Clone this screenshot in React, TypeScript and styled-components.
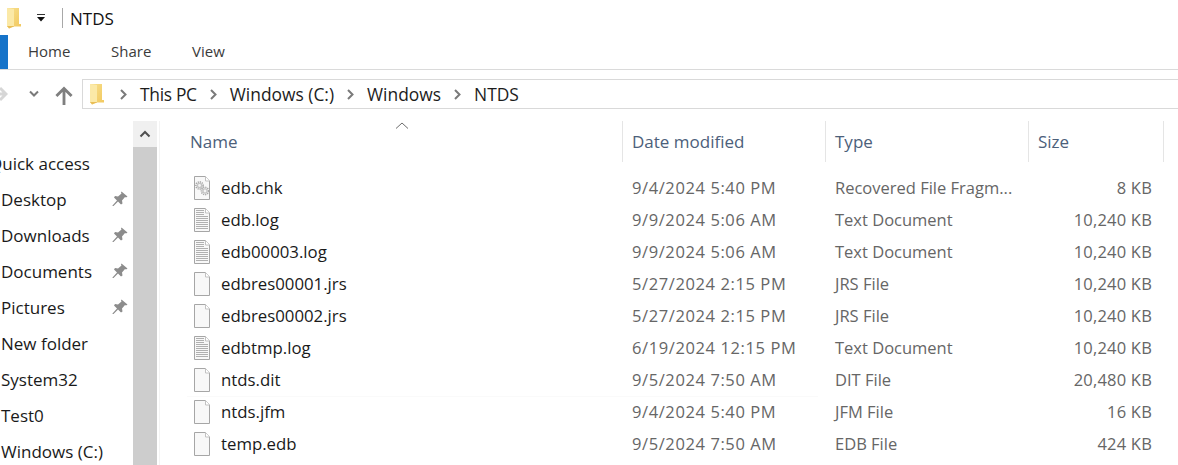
import React from "react";
import styled, { createGlobalStyle } from "styled-components";

const GlobalStyle = createGlobalStyle`
  html, body {
    margin: 0;
    padding: 0;
    background: #ffffff;
  }
  body {
    font-family: "Open Sans", "Noto Sans", "Liberation Sans", sans-serif;
    overflow: hidden;
  }
`;

const Page = styled.div`
  width: 1178px;
  height: 465px;
  overflow: hidden;
  display: flex;
  flex-direction: column;
`;

const TitleBar = styled.div`
  height: 34px;
  margin-top: 1px;
  display: flex;
  align-items: center;
  padding-left: 6px;
  font-size: 17px;
  color: #111111;
`;

const QuickMenu = styled.div`
  width: 16px;
  margin-left: 11px;
  margin-right: 13px;
  display: flex;
  justify-content: center;
`;

const TitleDivider = styled.div`
  width: 1px;
  height: 20px;
  background: #a8a8a8;
  margin-right: 7px;
`;

const RibbonTabs = styled.div`
  height: 34px;
  display: flex;
  align-items: center;
  border-bottom: 1px solid #dadada;
`;

const FileTab = styled.div`
  width: 8px;
  height: 34px;
  background: #1673c9;
  margin-right: 20px;
`;

const RibbonTab = styled.div<{ $width: number }>`
  width: ${({ $width }) => $width}px;
  font-size: 15px;
  line-height: 32px;
  height: 34px;
  color: #3b3b3b;
`;

const NavBar = styled.div`
  height: 30px;
  margin-top: 9px;
  display: flex;
  align-items: center;
`;

const NavButtons = styled.div`
  width: 82px;
  height: 30px;
  flex: none;
  display: flex;
  align-items: center;
`;

const ForwardArrow = styled.svg`
  width: 8px;
  height: 18px;
  margin-right: 20px;
`;

const RecentChevron = styled.svg`
  width: 12px;
  height: 8px;
  margin-right: 15px;
`;

const UpArrow = styled.svg`
  width: 18px;
  height: 19px;
  margin-top: 2px;
`;

const AddressBox = styled.div`
  flex: 1;
  height: 30px;
  box-sizing: border-box;
  border: 1px solid #d9d9d9;
  border-right: 0;
  display: flex;
  align-items: center;
  padding-left: 6px;
  font-size: 17.4px;
  color: #1c1c1c;
`;

const Crumb = styled.span<{ $tight?: boolean }>`
  white-space: nowrap;
  letter-spacing: ${({ $tight }) => ($tight ? "-0.3px" : "0")};
`;

const CrumbArrow = styled.svg<{ $first?: boolean }>`
  width: 7px;
  height: 11px;
  margin-left: ${({ $first }) => ($first ? 15 : 13)}px;
  margin-right: ${({ $first }) => ($first ? 13 : 13)}px;
`;

const Main = styled.div`
  flex: 1;
  margin-top: 12px;
  display: flex;
  min-height: 0;
`;

const NavPane = styled.div`
  width: 133px;
  flex: none;
  padding-top: 24px;
  box-sizing: border-box;
  overflow: hidden;
`;

const NavItem = styled.div<{ $outdent?: boolean }>`
  height: 36px;
  display: flex;
  align-items: center;
  justify-content: space-between;
  margin-left: ${({ $outdent }) => ($outdent ? -11 : 1)}px;
  padding-right: 5px;
  font-size: 17px;
  color: #1a1a1a;
  white-space: nowrap;
`;

const PinIcon = styled.svg`
  width: 16px;
  height: 16px;
  flex: none;
`;

const ScrollBar = styled.div`
  width: 24px;
  flex: none;
  display: flex;
  flex-direction: column;
  background: #cdcdcd;
`;

const ScrollUp = styled.div`
  height: 26px;
  background: #f0f0f0;
  display: flex;
  align-items: center;
  justify-content: center;
`;

const FileList = styled.div`
  flex: 1;
  margin-left: 2px;
  border-left: 1px solid #f3f3f3;
  position: relative;
`;

const columns = "462px 203px 203px 135px 1fr";

const HeaderRow = styled.div`
  display: grid;
  grid-template-columns: ${columns};
  height: 41px;
  margin-bottom: 10px;
  align-items: stretch;
`;

const HeaderCell = styled.div<{ $first?: boolean }>`
  display: flex;
  align-items: center;
  padding-left: ${({ $first }) => ($first ? 30 : 9)}px;
  border-left: ${({ $first }) => ($first ? "0" : "1px solid #e5e5e5")};
  font-size: 17px;
  color: #4c607a;
`;

const HeaderEnd = styled.div`
  border-left: 1px solid #e5e5e5;
`;

const SortCaret = styled.svg`
  position: absolute;
  left: 235px;
  top: 1px;
  width: 14px;
  height: 7px;
`;

const FileRow = styled.div`
  display: grid;
  grid-template-columns: ${columns};
  height: 32px;
  align-items: center;
  font-size: 16.5px;
  color: #666666;
  white-space: nowrap;
`;

const NameCell = styled.div`
  display: flex;
  align-items: center;
  padding-left: 33px;
  font-size: 16.8px;
  color: #1a1a1a;
`;

const FileName = styled.span`
  margin-left: 10px;
  padding-bottom: 2px;
`;

const DetailCell = styled.div<{ $spacing?: number }>`
  padding-left: 10px;
  padding-bottom: 2px;
  letter-spacing: ${({ $spacing }) => $spacing ?? 0}px;
`;

const SizeCell = styled.div`
  text-align: right;
  padding-right: 11px;
  padding-bottom: 2px;
  letter-spacing: 0.2px;
`;

const RowRule = styled.div`
  position: absolute;
  left: 27px;
  top: 275px;
  width: 631px;
  height: 1px;
  background: #fafafa;
`;

const FileIconSvg = styled.svg`
  width: 18px;
  height: 24px;
  flex: none;
`;

type IconKind = "blank" | "text" | "gear";

const Gear: React.FC<{ x: number; y: number; r: number }> = ({ x, y, r }) => (
  <g>
    <circle cx={x} cy={y} r={r} fill="none" stroke="#a8a8a8" strokeWidth="1.600" strokeDasharray="1.200 .9" />
    <circle cx={x} cy={y} r={r - 0.8} fill="#c4c4c4" />
    <circle cx={x} cy={y} r={r - 2.2} fill="#f4f4f4" />
  </g>
);

const FileIcon: React.FC<{ kind: IconKind }> = ({ kind }) => (
  <FileIconSvg viewBox="0 0 18 24">
    <path d="M1.500.5h11l4 4.500v18.500h-15z" fill="#f8f8f8" stroke="#a6a6a6" />
    <path d="M12.500.5v4.500h4" fill="#ffffff" stroke="#c2c2c2" />
    {kind === "text" &&
      [8, 10, 12, 14, 16, 18, 20].map((y) => (
        <rect key={y} x="3" y={y} width="12" height="1" fill="#b0b0b0" />
      ))}
    {kind === "text" && [2, 4, 6].map((y) => <rect key={y} x="3" y={y} width="8" height="1" fill="#b0b0b0" />)}
    {kind === "gear" && (
      <g>
        <Gear x={6.5} y={9.5} r={3.6} />
        <Gear x={12} y={15} r={3.6} />
      </g>
    )}
  </FileIconSvg>
);

const FolderSvg = styled.svg`
  width: 16px;
  height: 24px;
  flex: none;
`;

const FolderIcon: React.FC<{ id: string }> = ({ id }) => (
  <FolderSvg viewBox="0 0 16 24">
    <defs>
      <linearGradient id={id} x1="0" y1="0" x2="1" y2="1">
        <stop offset="0" stopColor="#f7e08f" />
        <stop offset="1" stopColor="#f2c95f" />
      </linearGradient>
    </defs>
    <path d="M1 2h12v16h2v2.500H1z" fill={`url(#${id})`} />
    <path d="M1 2l7 1v17l-5 2.500L1 20z" fill="#fbe9a7" />
    <path d="M1 20l2 2.500 5-2V20z" fill="#e9bd55" />
  </FolderSvg>
);

const Pin: React.FC = () => (
  <PinIcon viewBox="0 0 16 16">
    <path
      d="M9.500 0.500l6 5-1.500 1-1-.5-3 3.500.5 3-1.500 1-3-3-4.500 4.500H.5v-.5L5 9.500 2 6.500l1-1.500 3 .5L9.500 2.500l-.5-1z"
      fill="#8c8c8c"
    />
  </PinIcon>
);

const Arrow: React.FC<{ first?: boolean }> = ({ first }) => (
  <CrumbArrow viewBox="0 0 7 11" $first={first}>
    <path d="M1 1l4.500 4.500L1 10" fill="none" stroke="#7a7a7a" strokeWidth="2" />
  </CrumbArrow>
);

const navItems = [
  { label: "Quick access", outdent: true },
  { label: "Desktop", pinned: true },
  { label: "Downloads", pinned: true },
  { label: "Documents", pinned: true },
  { label: "Pictures", pinned: true },
  { label: "New folder" },
  { label: "System32" },
  { label: "Test0" },
  { label: "Windows (C:)" },
];

const files: { name: string; icon: IconKind; date: string; type: string; size: string }[] = [
  { name: "edb.chk", icon: "gear", date: "9/4/2024 5:40 PM", type: "Recovered File Fragm...", size: "8 KB" },
  { name: "edb.log", icon: "text", date: "9/9/2024 5:06 AM", type: "Text Document", size: "10,240 KB" },
  { name: "edb00003.log", icon: "text", date: "9/9/2024 5:06 AM", type: "Text Document", size: "10,240 KB" },
  { name: "edbres00001.jrs", icon: "blank", date: "5/27/2024 2:15 PM", type: "JRS File", size: "10,240 KB" },
  { name: "edbres00002.jrs", icon: "blank", date: "5/27/2024 2:15 PM", type: "JRS File", size: "10,240 KB" },
  { name: "edbtmp.log", icon: "text", date: "6/19/2024 12:15 PM", type: "Text Document", size: "10,240 KB" },
  { name: "ntds.dit", icon: "blank", date: "9/5/2024 7:50 AM", type: "DIT File", size: "20,480 KB" },
  { name: "ntds.jfm", icon: "blank", date: "9/4/2024 5:40 PM", type: "JFM File", size: "16 KB" },
  { name: "temp.edb", icon: "blank", date: "9/5/2024 7:50 AM", type: "EDB File", size: "424 KB" },
];

const App: React.FC = () => (
  <Page>
    <GlobalStyle />
    <TitleBar>
      <FolderIcon id="titleFolder" />
      <QuickMenu>
        <svg width="10" height="8" viewBox="0 0 10 8">
          <rect x="1" y="0" width="8" height="1" fill="#333" />
          <path d="M1 3h8L5 7.500z" fill="#111" />
        </svg>
      </QuickMenu>
      <TitleDivider />
      NTDS
    </TitleBar>
    <RibbonTabs>
      <FileTab />
      <RibbonTab $width={83}>Home</RibbonTab>
      <RibbonTab $width={81}>Share</RibbonTab>
      <RibbonTab $width={60}>View</RibbonTab>
    </RibbonTabs>
    <NavBar>
      <NavButtons>
        <ForwardArrow viewBox="0 0 8 18">
          <path d="M-6 9h12M0 3l6 6-6 6" fill="none" stroke="#d6d6d6" strokeWidth="3" />
        </ForwardArrow>
        <RecentChevron viewBox="0 0 12 8">
          <path d="M2 1.500l4 4 4-4" fill="none" stroke="#7a7a7a" strokeWidth="2" />
        </RecentChevron>
        <UpArrow viewBox="0 0 19 20">
          <path d="M9.500 20V3M1.500 10.500l8-8 8 8" fill="none" stroke="#7f7f7f" strokeWidth="3" />
        </UpArrow>
      </NavButtons>
      <AddressBox>
        <FolderIcon id="addressFolder" />
        <Arrow first />
        <Crumb $tight>This PC</Crumb>
        <Arrow />
        <Crumb>Windows (C:)</Crumb>
        <Arrow />
        <Crumb>Windows</Crumb>
        <Arrow />
        <Crumb>NTDS</Crumb>
      </AddressBox>
    </NavBar>
    <Main>
      <NavPane>
        {navItems.map((item) => (
          <NavItem key={item.label} $outdent={item.outdent}>
            {item.label}
            {item.pinned && <Pin />}
          </NavItem>
        ))}
      </NavPane>
      <ScrollBar>
        <ScrollUp>
          <svg width="12" height="8" viewBox="0 0 12 8">
            <path d="M1.500 6.500L6 2l4.500 4.500" fill="none" stroke="#505050" strokeWidth="2" />
          </svg>
        </ScrollUp>
      </ScrollBar>
      <FileList>
        <SortCaret viewBox="0 0 14 7">
          <path d="M1 6.500l6-5.500 6 5.500" fill="none" stroke="#6d6d6d" />
        </SortCaret>
        <HeaderRow>
          <HeaderCell $first>Name</HeaderCell>
          <HeaderCell>Date modified</HeaderCell>
          <HeaderCell>Type</HeaderCell>
          <HeaderCell>Size</HeaderCell>
          <HeaderEnd />
        </HeaderRow>
        {files.map((file) => (
          <FileRow key={file.name}>
            <NameCell>
              <FileIcon kind={file.icon} />
              <FileName>{file.name}</FileName>
            </NameCell>
            <DetailCell $spacing={0.6}>{file.date}</DetailCell>
            <DetailCell>{file.type}</DetailCell>
            <SizeCell>{file.size}</SizeCell>
          </FileRow>
        ))}
        <RowRule />
      </FileList>
    </Main>
  </Page>
);

export default App;
